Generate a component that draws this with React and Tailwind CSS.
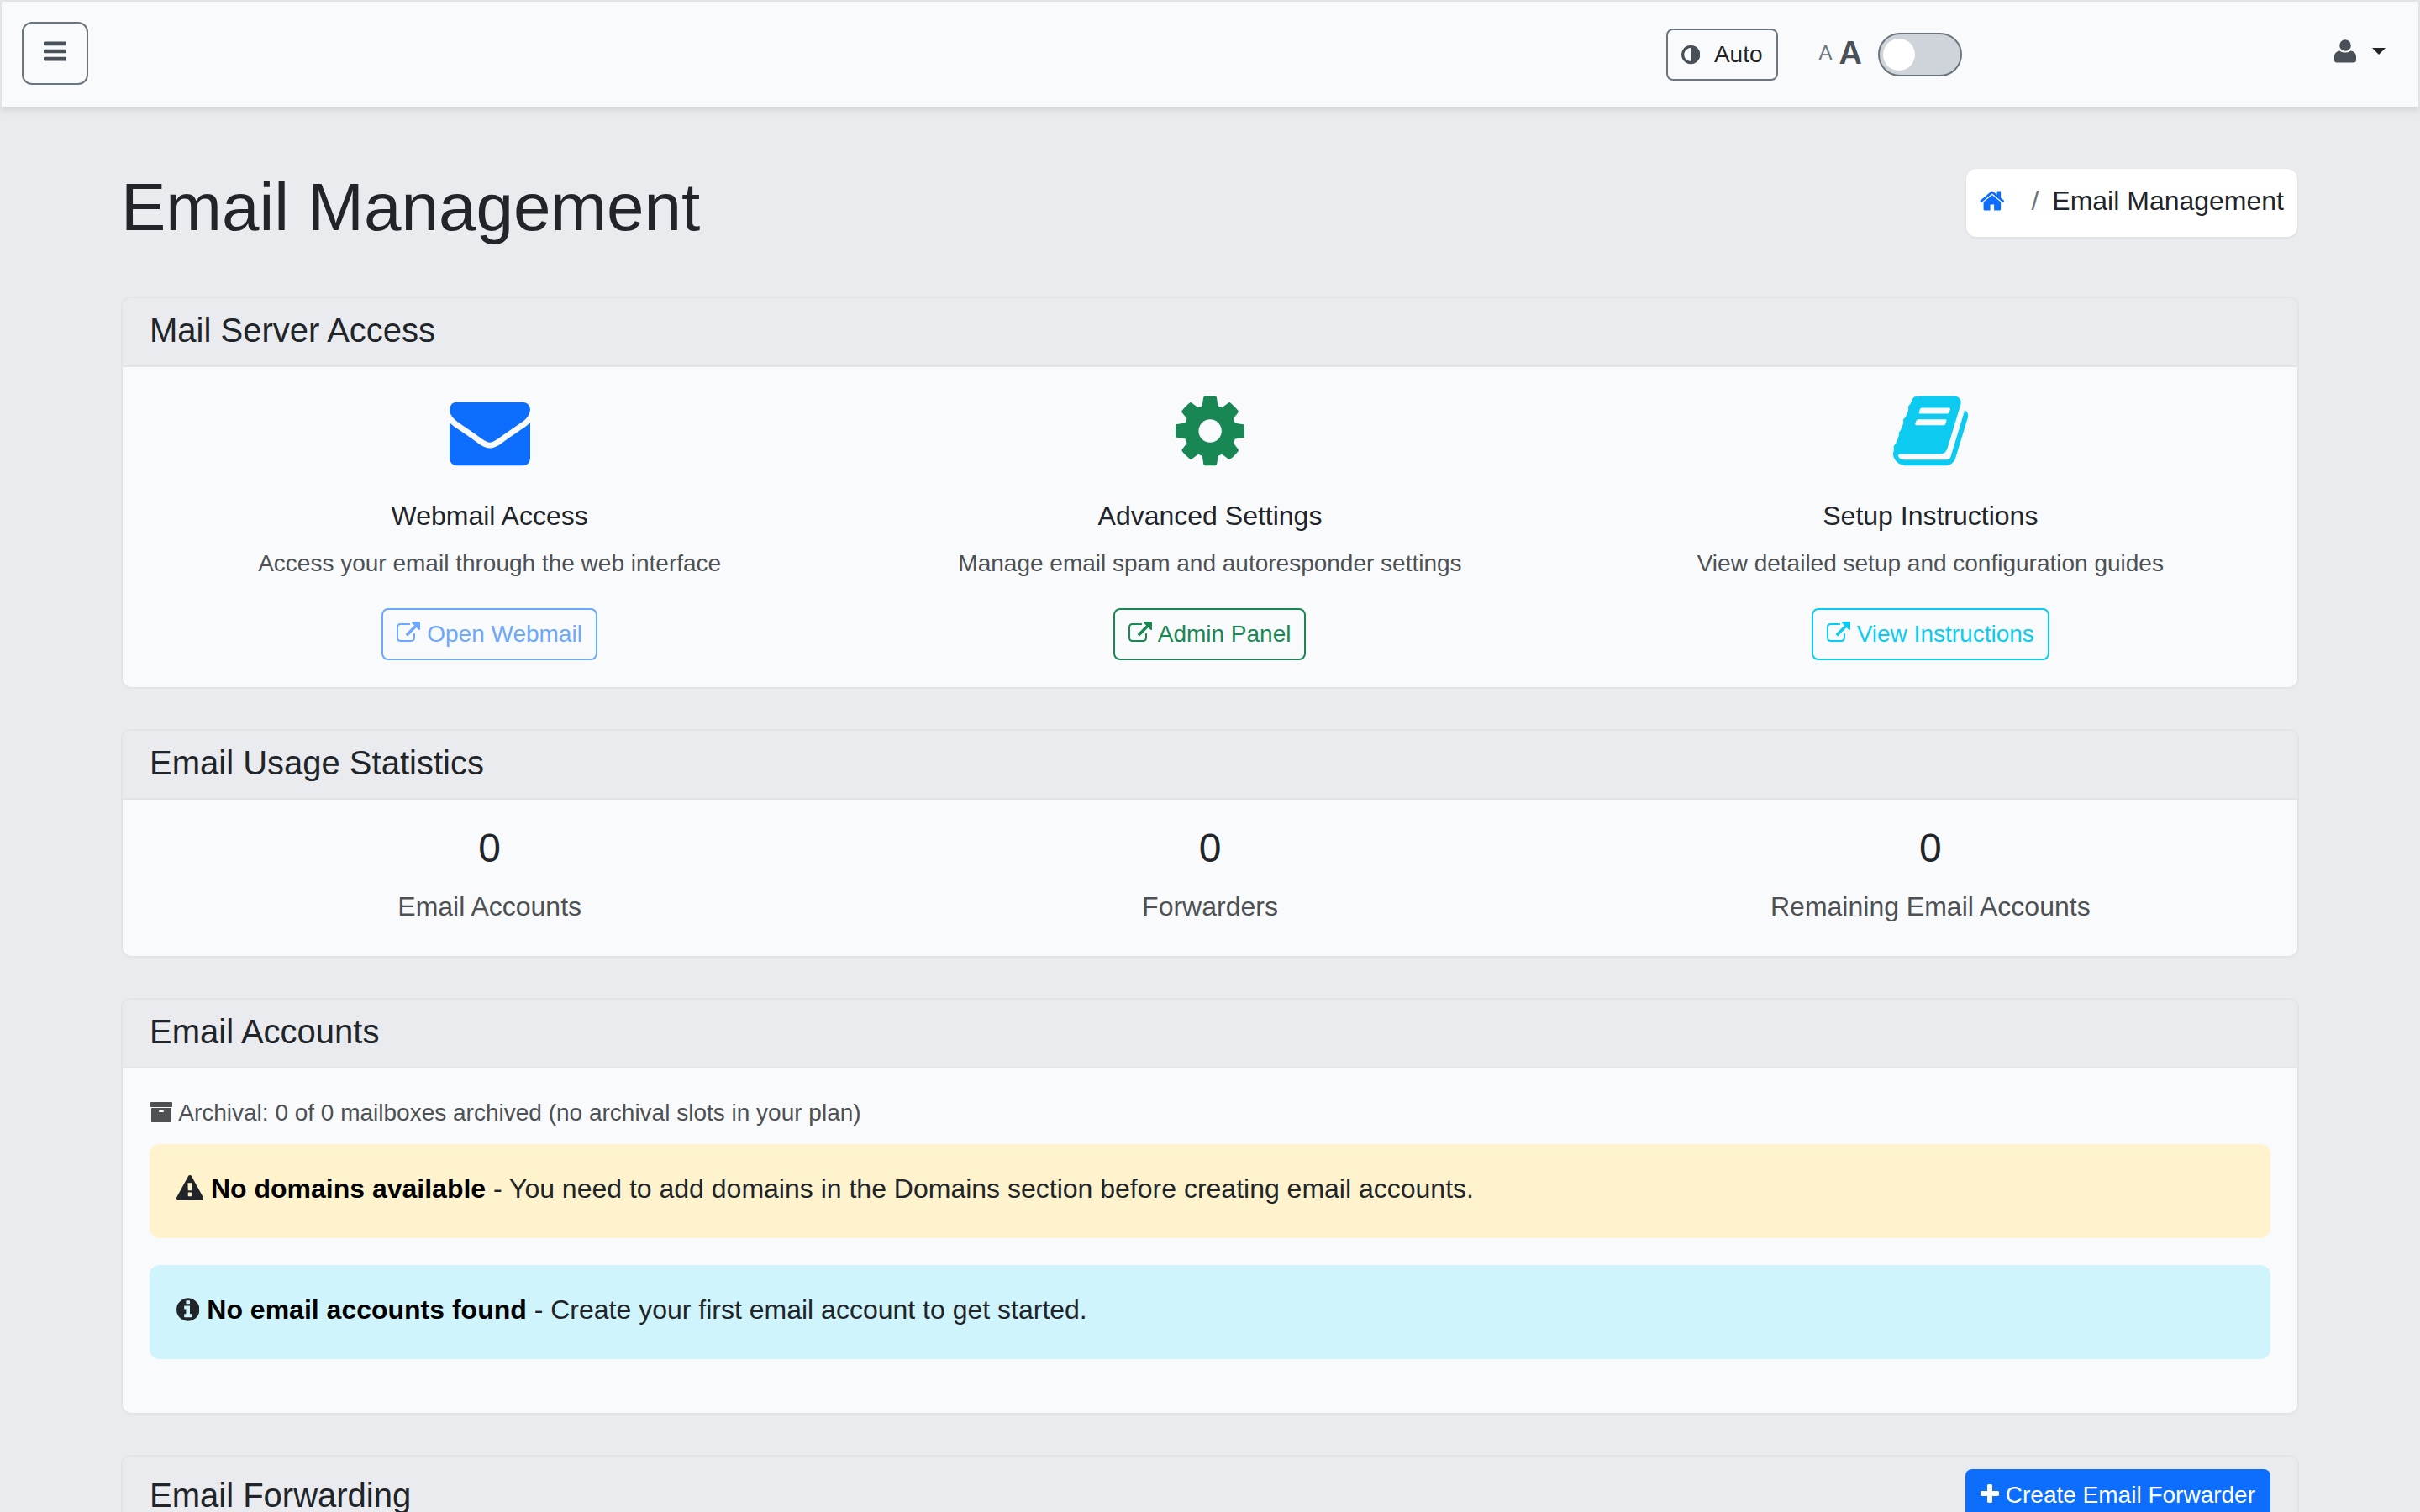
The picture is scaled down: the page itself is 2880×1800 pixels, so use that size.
const paths = {
  bars: "M1664 1344v128q0 26-19 45t-45 19h-1408q-26 0-45-19t-19-45v-128q0-26 19-45t45-19h1408q26 0 45 19t19 45zm0-512v128q0 26-19 45t-45 19h-1408q-26 0-45-19t-19-45v-128q0-26 19-45t45-19h1408q26 0 45 19t19 45zm0-512v128q0 26-19 45t-45 19h-1408q-26 0-45-19t-19-45v-128q0-26 19-45t45-19h1408q26 0 45 19t19 45z",
  cog: "M1152 896q0-106-75-181t-181-75-181 75-75 181 75 181 181 75 181-75 75-181zm512-109v222q0 12-8 23t-20 13l-185 28q-19 54-39 91 35 50 107 138 10 12 10 25t-9 23q-27 37-99 108t-94 71q-12 0-26-9l-138-108q-44 23-91 38-16 136-29 186-7 28-36 28h-222q-14 0-24.5-8.5t-11.5-21.5l-28-184q-49-16-90-37l-141 107q-10 9-25 9-14 0-25-11-126-114-165-168-7-10-7-23 0-12 8-23 15-21 51-66.5t54-70.5q-27-50-41-99l-183-27q-13-2-21-12.5t-8-23.5v-222q0-12 8-23t19-13l186-28q14-46 39-92-40-57-107-138-10-12-10-24 0-10 9-23 26-36 98.5-107.5t94.5-71.5q13 0 26 10l138 107q44-23 91-38 16-136 29-186 7-28 36-28h222q14 0 24.5 8.5t11.5 21.5l28 184q49 16 90 37l142-107q9-9 24-9 13 0 25 10 129 119 165 170 7 8 7 22 0 12-8 23-15 21-51 66.5t-54 70.5q26 50 41 98l183 28q13 2 21 12.5t8 23.5z",
  link: "M1408 928v320q0 119-84.5 203.5t-203.5 84.5h-832q-119 0-203.5-84.5t-84.5-203.5v-832q0-119 84.5-203.5t203.5-84.5h704q14 0 23 9t9 23v64q0 14-9 23t-23 9h-704q-66 0-113 47t-47 113v832q0 66 47 113t113 47h832q66 0 113-47t47-113v-320q0-14 9-23t23-9h64q14 0 23 9t9 23zm384-864v512q0 26-19 45t-45 19-45-19l-176-176-652 652q-10 10-23 10t-23-10l-114-114q-10-10-10-23t10-23l652-652-176-176q-19-19-19-45t19-45 45-19h512q26 0 45 19t19 45z",
  home: "M1472 992v480q0 26-19 45t-45 19h-384v-384h-256v384h-384q-26 0-45-19t-19-45v-480q0-1 .5-3t.5-3l575-474 575 474q1 2 1 6zm223-69l-62 74q-8 9-21 11h-3q-13 0-21-7l-692-577-692 577q-12 8-24 7-13-2-21-11l-62-74q-8-10-7-23.5t11-21.5l719-599q32-26 76-26t76 26l244 204v-195q0-14 9-23t23-9h192q14 0 23 9t9 23v408l219 182q10 8 11 21.5t-7 23.5z",
  envelope: "M1792 710v794q0 66-47 113t-113 47h-1472q-66 0-113-47t-47-113v-794q44 49 101 87 362 246 497 345 57 42 92.5 65.5t94.5 48 110 24.5h2q51 0 110-24.5t94.5-48 92.5-65.5q170-123 498-345 57-39 100-87zm0-294q0 79-49 151t-122 123q-376 261-468 325-10 7-42.5 30.5t-54 38-52 32.5-57.5 27-50 9h-2q-23 0-50-9t-57.5-27-52-32.5-54-38-42.5-30.5q-91-64-262-182.5t-205-142.5q-62-42-117-115.5t-55-136.5q0-78 41.5-130t118.5-52h1472q65 0 112.5 47t47.5 113z",
  book: "M1703 478q40 57 18 129l-275 906q-19 64-76.5 107.5t-122.5 43.5h-923q-77 0-148.5-53.5t-99.5-131.5q-24-67-2-127 0-4 3-27t4-37q1-8-3-21.5t-3-19.5q2-11 8-21t16.5-23.5 16.5-23.5q23-38 45-91.5t30-91.5q3-10 .5-30t-.5-28q3-11 17-28t17-23q21-36 42-92t25-90q1-9-2.5-32t.5-28q4-13 22-30.5t22-22.5q19-26 42.5-84.5t27.5-96.5q1-8-3-25.5t-2-26.5q2-8 9-18t18-23 17-21q8-12 16.5-30.5t15-35 16-36 19.5-32 26.5-23.5 36-11.5 47.5 5.5l-1 3q38-9 51-9h761q74 0 114 56t18 130l-274 906q-36 119-71.5 153.5t-128.5 34.5h-869q-27 0-38 15-11 16-1 43 24 70 144 70h923q29 0 56-15.5t35-41.5l300-987q7-22 5-57 38 15 59 43zm-1064 2q-4 13 2 22.5t20 9.5h608q13 0 25.5-9.5t16.5-22.5l21-64q4-13-2-22.5t-20-9.5h-608q-13 0-25.5 9.5t-16.5 22.5zm-83 256q-4 13 2 22.5t20 9.5h608q13 0 25.5-9.5t16.5-22.5l21-64q4-13-2-22.5t-20-9.5h-608q-13 0-25.5 9.5t-16.5 22.5z",
  archive: "M1088 832q0-26-19-45t-45-19h-256q-26 0-45 19t-19 45 19 45 45 19h256q26 0 45-19t19-45zm576-192v960q0 26-19 45t-45 19h-1408q-26 0-45-19t-19-45v-960q0-26 19-45t45-19h1408q26 0 45 19t19 45zm64-448v256q0 26-19 45t-45 19h-1536q-26 0-45-19t-19-45v-256q0-26 19-45t45-19h1536q26 0 45 19t19 45z",
  warning: "M1024 1375v-190q0-14-9.5-23.5t-22.5-9.5h-192q-13 0-22.5 9.5t-9.5 23.5v190q0 14 9.5 23.5t22.5 9.5h192q13 0 22.5-9.5t9.5-23.5zm-2-374l18-459q0-12-10-19-13-11-24-11h-220q-11 0-24 11-10 7-10 21l17 457q0 10 10 16.5t24 6.5h185q14 0 23.5-6.5t10.5-16.5zm-14-934l768 1408q35 63-2 126-17 29-46.5 46t-63.5 17h-1536q-34 0-63.5-17t-46.5-46q-37-63-2-126l768-1408q17-31 47-49t65-18 65 18 47 49z",
  info: "M1152 1376v-160q0-14-9-23t-23-9h-96v-512q0-14-9-23t-23-9h-320q-14 0-23 9t-9 23v160q0 14 9 23t23 9h96v320h-96q-14 0-23 9t-9 23v160q0 14 9 23t23 9h448q14 0 23-9t9-23zm-128-896v-160q0-14-9-23t-23-9h-192q-14 0-23 9t-9 23v160q0 14 9 23t23 9h192q14 0 23-9t9-23zm640 416q0 209-103 385.5t-279.5 279.5-385.5 103-385.5-103-279.5-279.5-103-385.5 103-385.5 279.5-279.5 385.5-103 385.5 103 279.5 279.5 103 385.5z",
  plus: "M1600 736v192q0 40-28 68t-68 28h-416v416q0 40-28 68t-68 28h-192q-40 0-68-28t-28-68v-416h-416q-40 0-68-28t-28-68v-192q0-40 28-68t68-28h416v-416q0-40 28-68t68-28h192q40 0 68 28t28 68v416h416q40 0 68 28t28 68z",
  adjust: "M896 1440v-1088q-148 0-273 73t-198 198-73 273 73 273 198 198 273 73zm768-544q0 209-103 385.5t-279.5 279.5-385.5 103-385.5-103-279.5-279.5-103-385.5 103-385.5 279.5-279.5 385.5-103 385.5 103 279.5 279.5 103 385.5z",
};

const widths = { bars: 1536, cog: 1536, link: 1792, home: 1664, envelope: 1792, book: 1664, archive: 1792, warning: 1792, info: 1536, plus: 1408, adjust: 1536 };

function Icon({ name, className = "" }) {
  const w = widths[name];
  return (
    <svg
      viewBox={`${(1792 - w) / 2} 0 ${w} 1792`}
      width={`${w / 1792}em`}
      height="1em"
      fill="currentColor"
      className={`inline align-[-0.143em] ${className}`}
    >
      <path d={paths[name]} />
    </svg>
  );
}

function UserIcon() {
  return (
    <svg viewBox="0 0 26 28" width="26" height="28" fill="currentColor">
      <circle cx="13" cy="7" r="6.8" />
      <path d="M6.5 13.4C8 14.7 10.3 15.5 13 15.5S18 14.7 19.5 13.4C23.5 13.8 26 16.6 26 20.5V24.5C26 26.5 24.8 27.5 23 27.5H3C1.2 27.5 0 26.5 0 24.5V20.5C0 16.6 2.5 13.8 6.5 13.4Z" />
    </svg>
  );
}

function Card({ title, action, children }) {
  return (
    <section className="mb-[48px] rounded-[12px] border-2 border-[#e2e5e8] bg-[#f9fafc]">
      <div className="flex items-center justify-between rounded-t-[10px] border-b-2 border-[#e2e5e8] bg-[#e9ebee] px-8 pb-[18px] pt-[14px]">
        <h2 className="text-[40px] leading-[48px] text-[#212529]">{title}</h2>
        {action}
      </div>
      {children}
    </section>
  );
}

const tools = [
  {
    icon: "envelope",
    iconColor: "text-[#0d6efd]",
    title: "Webmail Access",
    text: "Access your email through the web interface",
    button: "Open Webmail",
    buttonColor: "border-[#6ea8fe] text-[#6ea8fe]",
  },
  {
    icon: "cog",
    iconColor: "text-[#198754]",
    title: "Advanced Settings",
    text: "Manage email spam and autoresponder settings",
    button: "Admin Panel",
    buttonColor: "border-[#198754] text-[#198754]",
  },
  {
    icon: "book",
    iconColor: "text-[#0dcaf0]",
    title: "Setup Instructions",
    text: "View detailed setup and configuration guides",
    button: "View Instructions",
    buttonColor: "border-[#0dcaf0] text-[#0dcaf0]",
  },
];

const stats = [
  { value: 0, label: "Email Accounts" },
  { value: 0, label: "Forwarders" },
  { value: 0, label: "Remaining Email Accounts" },
];

export default function App() {
  return (
    <div className="h-screen overflow-hidden bg-[#e9ebee] font-['Liberation_Sans',sans-serif] text-[32px] leading-[48px] text-[#212529]">
      {/* Navbar */}
      <nav className="flex h-[127px] items-center border-2 border-b-0 border-[#e2e5e8] bg-[#f9fafc] pl-6 pr-[39px] shadow-[0_4px_8px_rgba(0,0,0,0.1)]">
        <button className="mb-[2px] h-[75px] rounded-[12px] border-2 border-[#6c757d] bg-transparent px-6 pb-[5px] text-[#495057]">
          <Icon name="bars" />
        </button>

        <div className="ml-auto mr-[443px] flex items-center">
          <button className="flex h-[62px] w-[133px] items-center rounded-[8px] border-2 border-[#6c757d] px-4 text-[28px] leading-[42px] text-[#212529]">
            <Icon name="adjust" className="text-[#495057]" />
            <span className="ml-[17px]">Auto</span>
          </button>
          <div className="mb-[3px] ml-[49px] flex items-center text-[#495057]">
            <span className="text-[24px] leading-none text-[#6c757d]">A</span>
            <span className="ml-[8px] text-[38px] font-bold leading-none">A</span>
          </div>
          <div className="ml-[19px] flex h-[52px] w-[100px] items-center rounded-full border-2 border-[#6c757d] bg-[#ced4da] px-1">
            <div className="h-[38px] w-[38px] rounded-full bg-white" />
          </div>
        </div>

        <div className="mb-[7px] flex items-center text-[#495057]">
          <UserIcon />
          <div className="ml-[19px] h-0 w-0 border-x-[8px] border-t-[8px] border-x-transparent border-t-[#212529]" />
        </div>
      </nav>

      <main className="px-[144px] pt-[72px]">
        {/* Page heading */}
        <div className="mb-[58px] flex items-start justify-between">
          <h1 className="text-[80px] leading-[96px]">Email Management</h1>
          <div className="mr-[2px] mt-[2px] flex h-[81px] items-start rounded-[12px] bg-white px-4 pt-[14px] shadow-[0_1px_3px_rgba(0,0,0,0.08)]">
            <Icon name="home" className="mt-[8px] text-[#0d6efd]" />
            <span className="ml-[32px] mr-[16px] text-[#6c757d]">/</span>
            <span>Email Management</span>
          </div>
        </div>

        <Card title="Mail Server Access">
          <div className="p-8">
            <div className="-mx-6 grid grid-cols-3">
              {tools.map((tool) => (
                <div key={tool.title} className="px-6 text-center">
                  <div className={`-mt-[4px] mb-[33px] text-[96px] leading-none ${tool.iconColor}`}>
                    <Icon name={tool.icon} />
                  </div>
                  <h5 className="mb-[17px] text-[32px] leading-[38px]">{tool.title}</h5>
                  <p className="mb-8 text-[28px] leading-[42px] text-[#4d5154]">{tool.text}</p>
                  <a className={`inline-block rounded-[8px] border-2 px-4 py-2 text-[28px] leading-[42px] ${tool.buttonColor}`}>
                    <Icon name="link" /> {tool.button}
                  </a>
                </div>
              ))}
            </div>
          </div>
        </Card>

        <Card title="Email Usage Statistics">
          <div className="px-8 pb-[35px] pt-[29px]">
            <div className="-mx-6 grid grid-cols-3">
              {stats.map((stat) => (
                <div key={stat.label} className="px-6 text-center">
                  <h3 className="mb-4 text-[48px] leading-[58px]">{stat.value}</h3>
                  <p className="text-[#4d5154]">{stat.label}</p>
                </div>
              ))}
            </div>
          </div>
        </Card>

        <Card title="Email Accounts">
          <div className="p-8">
            <p className="mb-4 text-[28px] leading-[42px] text-[#4d5154]">
              <Icon name="archive" /> Archival: 0 of 0 mailboxes archived (no archival slots in your plan)
            </p>
            <div className="mb-8 rounded-[12px] bg-[#fff3cd] px-8 pb-[35px] pt-[29px]">
              <Icon name="warning" /> <strong className="text-black">No domains available</strong> - You need to add domains in the Domains section before creating email accounts.
            </div>
            <div className="mb-8 rounded-[12px] bg-[#cff4fc] px-8 pb-[35px] pt-[29px]">
              <Icon name="info" /> <strong className="text-black">No email accounts found</strong> - Create your first email account to get started.
            </div>
          </div>
        </Card>

        <Card
          title="Email Forwarding"
          action={
            <button className="mt-[1px] rounded-[8px] bg-[#0d6efd] px-[18px] py-[10px] text-[28px] leading-[42px] text-white">
              <Icon name="plus" /> Create Email Forwarder
            </button>
          }
        >
          <div className="h-[200px]" />
        </Card>
      </main>
    </div>
  );
}
